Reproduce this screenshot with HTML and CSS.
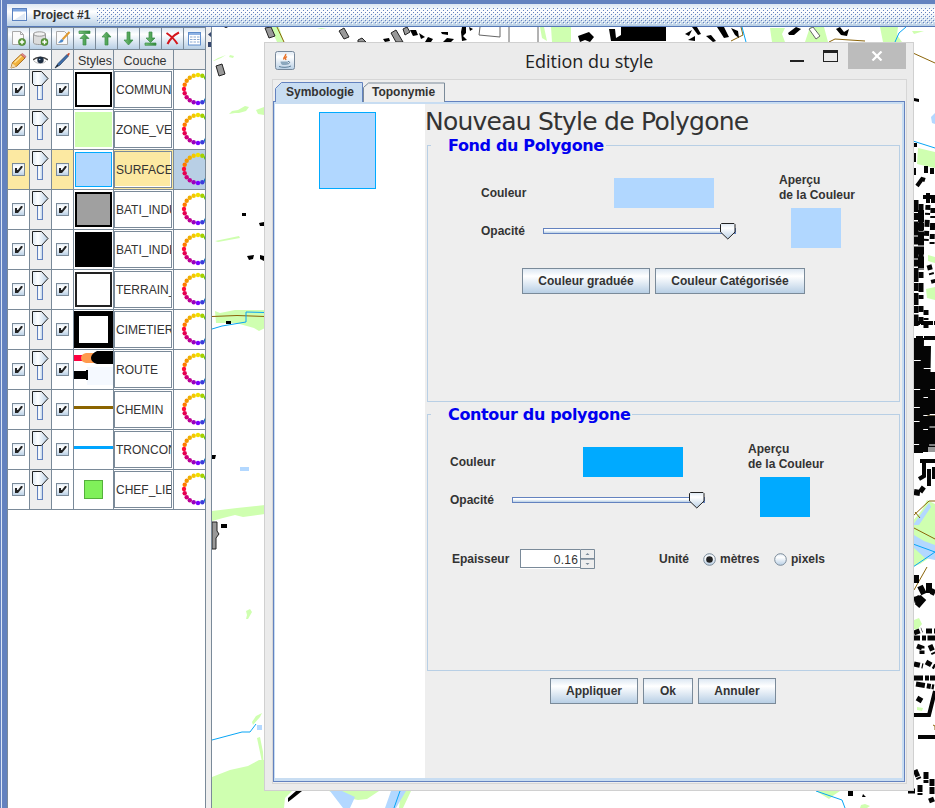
FILE: index.html
```
<!DOCTYPE html>
<html lang="fr">
<head>
<meta charset="utf-8">
<title>Project #1</title>
<link rel="stylesheet" href="styles.css">
</head>
<body>
<svg class="defs" width="0" height="0" aria-hidden="true">
  <defs>
    <linearGradient id="metal" x1="0" y1="0" x2="0" y2="1"><stop offset="0" stop-color="#dde8f3"/><stop offset=".3" stop-color="#fff"/><stop offset="1" stop-color="#b8cfe5"/></linearGradient>
    <linearGradient id="metalH" x1="0" y1="0" x2="1" y2="0"><stop offset="0" stop-color="#dde8f3"/><stop offset=".35" stop-color="#fff"/><stop offset="1" stop-color="#b8cfe5"/></linearGradient>
    <linearGradient id="green" x1="0" y1="0" x2="1" y2="0"><stop offset="0" stop-color="#7cc47c"/><stop offset="1" stop-color="#2f8a3a"/></linearGradient>
    <pattern id="bumps" width="4" height="4" patternUnits="userSpaceOnUse"><path d="M0 0h1v1H0zM2 2h1v1H2z" fill="#6382bf"/><path d="M1 1h1v1H1zM3 3h1v1H3z" fill="#fff"/></pattern>
    <symbol id="plus" viewBox="0 0 8 8"><circle cx="4" cy="4" r="3.6" fill="#5b9a3c" stroke="#3f7a28" stroke-width=".6"/><path d="M4 1.8v4.4M1.8 4h4.4" stroke="#fff" stroke-width="1.4"/></symbol>
    <symbol id="thumb" viewBox="0 0 16 17"><path d="M.5 1.500 1.500.5h12.500l1 1v7.500L7.800 16 .5 9z" fill="url(#metal)" stroke="#222" stroke-width="1"/></symbol>
  </defs>
</svg>
<div class="frame">
  <header class="titlebar">
    <svg class="win-icon" width="16" height="14"><rect x=".5" y=".5" width="14" height="12" fill="#fff" stroke="#5a82c0"/><rect x="1" y="1" width="13" height="2.500" fill="#7ea6e0"/><path d="M2 12 13 5v7z" fill="#dfe9f5"/></svg>
    <span class="project">Project #1</span>
    <svg class="bumps" width="838" height="16"><rect width="838" height="16" fill="url(#bumps)"/></svg>
  </header>
  <div class="main">
    <aside class="layers">
      <div class="toolbar">
        <button><svg width="17" height="17"><path d="M2.500 1.500h8l3 3v10h-11z" fill="#fafafa" stroke="#aaa"/><path d="M10.500 1.500v3h3" fill="none" stroke="#aaa"/><use href="#plus" x="8" y="8" width="8" height="8"/></svg></button>
        <button><svg width="17" height="17"><path d="M1.500 4v9c1 2 11 2 12 0V4z" fill="#dcdcdc" stroke="#999"/><ellipse cx="7.500" cy="4" rx="6" ry="2.200" fill="#f2f2f2" stroke="#999"/><use href="#plus" x="8.500" y="8" width="8" height="8"/></svg></button>
        <button><svg width="17" height="17"><path d="M2.500 1.500h8l3 3v10h-11z" fill="#fafafa" stroke="#aaa"/><path d="m15.500 2-7 7.500" stroke="#e09a30" stroke-width="2"/><path d="M4 12.500c2-.5 2-3 4-3.500l1.500 1.500c-.5 2-3 2.500-5.500 2z" fill="#4a86c8"/></svg></button>
        <button><svg width="17" height="17"><path d="M3 1h11v2.500H3zM8.500 4 13 8.500h-3V15H7V8.500H4z" fill="url(#green)" stroke="#3a8d49" stroke-width=".7"/></svg></button>
        <button><svg width="17" height="17"><path d="M8.500 2 13 7h-3v8H7V7H4z" fill="url(#green)" stroke="#3a8d49" stroke-width=".7"/></svg></button>
        <button><svg width="17" height="17"><path d="M8.500 15 13 10h-3V2H7v8H4z" fill="url(#green)" stroke="#3a8d49" stroke-width=".7"/></svg></button>
        <button><svg width="17" height="17"><path d="M8.500 12.500 13 8h-3V2H7v6H4zM3 13h11v2.300H3z" fill="url(#green)" stroke="#3a8d49" stroke-width=".7"/></svg></button>
        <button><svg width="17" height="17"><path d="M2.500 3C7 6 11 10 13.500 14M15 2.500C10 5 6 9 3.500 14" fill="none" stroke="#d4161c" stroke-width="2"/></svg></button>
        <button><svg width="17" height="17"><rect x="2.500" y="2.500" width="12" height="12.500" fill="#fff" stroke="#5f8dcc"/><path d="M3 4h11" stroke="#8fb3e4" stroke-width="2"/><path d="M4 7h9.500M4 9.500h9.500M4 12h9.500" stroke="#8aa8d0" stroke-dasharray="2.500 1"/></svg></button>
      </div>
      <div class="row head">
        <div class="c"><svg width="18" height="16"><path d="m1 15 1.500-5.500L11 1.500l4 3.500-8.500 8.300z" fill="#f2b33c" stroke="#a86b1e"/><path d="m4.500 9.500 7-6.500" stroke="#ffe29a" stroke-width="1.500"/><path d="m11 1.500 1.500-1 3.500 3-1 1.500z" fill="#e58a8a" stroke="#b45a55" stroke-width=".6"/><path d="m1 15 1.500-4.500 3.500 3z" fill="#f3dcae"/></svg></div>
        <div class="c eye"><svg width="15" height="10"><path d="M0 5c3-3.500 11-4 15 0" fill="none" stroke="#444" stroke-width="1.400"/><path d="M1 6c3 3 9 3.500 12 0" fill="none" stroke="#999" stroke-width=".7"/><circle cx="7.500" cy="5" r="3.200" fill="#1d2d42"/><circle cx="6.700" cy="4.500" r=".8" fill="#9cc3e6"/></svg></div>
        <div class="c"><svg width="18" height="17"><path d="m1 16 3-4.500L13 2.500l1.500 1.500L6 13z" fill="#3e6fae" stroke="#1b3557" stroke-width=".7"/><path d="m13 2.500 1.500-1.500 1.500.5-1.500 2.500z" fill="#c84a2c"/><path d="m1 16 2.500-3.500 1 1z" fill="#222"/></svg></div>
        <div class="c">Styles</div><div class="c name-head">Couche</div><div class="c"></div>
      </div>
      <div id="rows"></div>
    </aside>
    <div class="divider"><svg width="5" height="20"><path d="M5 1v5L2 3.500zM2 11h3v5H2z" fill="#34466e"/></svg></div>
    <svg class="map" viewBox="212 27 723 781" width="723" height="781">
      <rect x="212" y="27" width="723" height="781" fill="#fff"/>
      <g fill="#cfffb0">
        <path d="M213 61l5-3 8-3-5 3-7 3zM230 55l4 1-1 2-4-1zM229 114l3-3 6-1 7-4 4 1-3 4-7 2-4 0zM256 110l8-3v8l-6-1zM215 241l24-5 1 2-22 4zM215 311l5 2 15-3 30 0v18l-6 3-5-3-18-5-20 0z"/>
        <path d="M212 511l25-3 28-3v9l-22 3-8-2-12 3-11 3zM246 611l4-2 2 3-4 7h-2l1-4zM252 722l4-6 6-3-2 4-7 8zM257 738l3-1 3 15 1 20-3-15z"/>
        <path d="M212 777l18-7 18-4 11-6h5v31h28l-7 7-1 10h-72zM329 791h50l-12 8-9 1-15-3zM401 791h10l-8 17h-4zM861 805l4-1 5 2-3 2h-7zM816 791h24l-6 4-5 4z"/>
        <path d="M270 27h9l5 15h-7zM317 28h10l-6 1zM540 27h4l3 14-5-3zM551 27h20v15h-19zM770 28h15l-3 6 3 8h-13zM810 27h14l4 15h-23zM880 27h18l-1 8 5 7h-19zM912 31l12 0-10 3zM918 148l17 4v16l-18-4zM928 255l7 2v6l-7-2zM926 289l9-2v13l-8-2zM912 522l10-12 5-10 8 4v50l-15 10-8 3zM914 620l5-2 3 6-5 6-3-1zM917 707l6 1-1 3-5-1z"/>
      </g>
      <g fill="#b3d8ff"><path d="M240 467h9v4h-9zM257 725h5v5h-5zM914 535l10 6 11 4v15l-10-2-11-10zM913 525l16-22 2 4-12 18zM330 791h12l13 6-5 11h-7zM391 791h15l-10 17h-11zM935 113l-4 4 1 6 3 1z"/></g>
      <g fill="none" stroke="#8b6409"><path d="M212 316.500l25-1 28 1M277 27l7 15M741 27l2 8-12 6M829 42l6-3 30 2M913 53l22 10M913 516l16-15 6 0M914 528l21 11M914 590l13-23M915 512l5 6M927 416h8"/></g>
      <g fill="none" stroke="#08a5f5"><path d="M212 329l10-3 24-4 0-10 19 .5M212 740l30-8 8 0 6-8M400 791l-6 17M742 27l4 15M895 42l4-9 7-6M816 791l26 9 3 8M913 141l22 7M913 544l22 8-22 15"/></g>
      <g fill="#999" stroke="#222" stroke-width="1"><path d="M216 66l6-2 3 10-6 2zM265 28l6-1 4 9-6 2zM339 31l5-3 5 9-5 2zM358 40l4-2 4 4h-8zM391 33l5-3 7 12h-7zM403 29l4-2 3 5-5 3zM212 522h5v9l2 3-3 4v11h-4z"/></g>
      <g fill="#fff" stroke="#666"><path d="M480 27l-1 8 21 2v-10M509 27v15M538 27v15M809 29l4-2 7 9-4 3z"/></g>
      <path d="M242 213h4v3h-4zM259 223l5-1v4h-4zM247 256l7-1-1 4-4 1zM260 255l4 1v5l-4-2zM226 321h5v3h-5zM212 455l4 0-1 4h-3zM221 524h6v4h-6zM288 798l8-7h6l-10 8-4 3zM848 791h5v5h-5zM863 794l3 3-4 0zM224 27l4 0-2 1z"/>
      <path d="M410 30h6l2 5-5 1zM419 33l6 4-4 2zM428 37l5 2-2 3h-6zM441 32l7 0 0 3-6-1zM447 38l7 1-3 3h-8zM462 27h4v6l-3 3 4 4-5 1-1-9zM469 27l4 2-3 2zM383 39l6-1 1 3-5 1zM578 36l11-4 5 5-4 5-5-2-5 2zM609 29h6l1 9 5-3v-8h45v14h-55zM685 34l7-4-3 6zM688 40l7-4 0 5zM692 27h5l4 7-3 1zM706 36l5-1 5 6-3 1zM717 27l7 0 5 10-5 1zM731 28l7 3 1 7-4-3zM788 33l8-6 5 2-7 6-5 0zM836 29l4-2 4 5 5-3-2 7-6-1zM914 98l5 1v3l-5-1z"/>
      <!-- dense housing along the eastern edge -->
      <g fill="none" stroke="#050505">
        <path d="M915 143v4M914 153v9M914 168v7M926 166v7M932 168v6M917 186l5-7 3 1M928 193v10M933 195v8M923 197h8" stroke-width="4"/>
        <path d="M915.500 200v126M921 210v60" stroke-width="6" stroke-dasharray="12 1 7 1.500 14 1 8 2"/>
        <path d="M921 204v120" stroke-width="5" stroke-dasharray="6 5 9 3 4 7"/>
        <path d="M928 205l-2 40M933 208l-1 38M929 265l5 18M926 310v18" stroke-width="5" stroke-dasharray="5 3 2 5 7 4"/>
        <path d="M913 323h22M916 338h19" stroke-width="4" stroke-dasharray="7 1 12 1"/>
        <path d="M919 338l-1 115M926 346l-2 107" stroke-width="10" stroke-dasharray="22 1 28 1 17 1 13 1"/>
        <path d="M932 372v78" stroke-width="8" stroke-dasharray="17 1 24 1.500 11 1"/>
        <path d="M924 462v14l-5 3M920 461h15M929 469v17M934 467v12" stroke-width="4"/>
        <path d="M914 492l6 1M920 488l4 3M916 575v8M920 586l4 8M929 583v10M916 597l5 5" stroke-width="6"/>
        <path d="M914 600l8-2M917 606l7-8M931 591l4 2" stroke-width="6"/>
        <path d="M914 633l8-3M926 631h9M914 638h21M917 646l5 2 0 6M930 645l4 9M914 664l9 2M926 662l9 5" stroke-width="5" stroke-dasharray="6 2 4 1.500 8 2"/>
        <path d="M914 678h21M916 684l18 3M917 698l5 3" stroke-width="5" stroke-dasharray="9 2 4 1"/>
        <path d="M913 715h16l6-24M918 737h17" stroke-width="4"/>
        <path d="M915 770l4 9M926 772v11M932 779v15M920 785v10M908 791h7M929 801l5-2" stroke-width="5" stroke-dasharray="7 1"/>
      </g>
      <path d="M928 447h7v5h-7zM912 458h2v8h-2z" fill="#999"/>
      <path d="M933 725l2 1v4" fill="none" stroke="#8b6409"/>
    </svg>
  </div>
</div>

<section class="dialog">
  <div class="dialog-title">
    <svg class="java" width="20" height="20"><rect x=".5" y=".5" width="19" height="18" rx="2" fill="url(#metal)" stroke="#77889a"/><path d="M10.500 3c1.500 2-3 3-1.500 5.500M12 5.500c-2 1.500-2 1.500-1 3.500" fill="none" stroke="#e8742c" stroke-width="1.500"/><path d="M5.500 10.500h7.500c0 2-1 3-1.500 3.500h-4c-1-.5-2-1.500-2-3.500z" fill="#8ba7bd"/><path d="M13 10.500c2.500-.5 2 2.500-.8 2.500M4 15.500c3 1.200 9 1.200 12-.5" fill="none" stroke="#5d7e98"/></svg>
    <h1>Edition du style</h1>
    <div class="controls"><i class="min"></i><i class="max"></i><span class="close"><svg width="12" height="10"><path d="M1.500.5l9 9M10.500.5l-9 9" stroke="#fff" stroke-width="2.200"/></svg></span></div>
  </div>
  <div class="content">
    <nav class="tabs">
      <svg class="tab-shape" width="172" height="20"><path d="M88.500 20V5.500l5-4.500h76v19" fill="#eee" stroke="#7a8a99"/><path d="M.5 20V6.500L6.500.500h81V20z" fill="#c8ddf2"/><path d="M.5 20V6.500L6.500.500h81V20" fill="none" stroke="#6382bf"/></svg>
      <span class="tab one">Symbologie</span><span class="tab two">Toponymie</span>
    </nav>
    <div class="pane">
      <div class="preview"><i></i></div>
      <div class="form">
        <h2>Nouveau Style de Polygone</h2>
        <section class="group fill">
          <h3>Fond du Polygone</h3>
          <div class="split">
            <div class="fields">
              <div class="field color"><label>Couleur</label><i class="swatch"></i></div>
              <div class="field"><label>Opacité</label><span class="slider"><i></i><svg width="16" height="17"><use href="#thumb"/></svg></span></div>
            </div>
            <div class="apercu"><p>Aperçu<br>de la Couleur</p><i></i></div>
          </div>
          <div class="buttons"><button style="width:128px">Couleur graduée</button><button style="width:150px">Couleur Catégorisée</button></div>
        </section>
        <section class="group stroke">
          <h3>Contour du polygone</h3>
          <div class="split">
            <div class="fields">
              <div class="field color"><label>Couleur</label><i class="swatch"></i></div>
              <div class="field"><label>Opacité</label><span class="slider"><i></i><svg width="16" height="17"><use href="#thumb"/></svg></span></div>
            </div>
            <div class="apercu"><p>Aperçu<br>de la Couleur</p><i></i></div>
          </div>
          <div class="width-row">
            <label class="ep">Epaisseur</label>
            <span class="spinner"><span>0.16</span><b><svg width="15" height="20"><path d="M.5.500h14v19H.500zM0 9.500h15" fill="none" stroke="#7a8a99"/><path d="M0 10.500h15" stroke="#7a8a99" stroke-width=".7"/><path d="M5.500 6 7.500 4l2 2zM5.500 14l2 2 2-2z" fill="#7a8a99"/></svg></b></span>
            <label class="unit">Unité</label>
            <svg class="radio" width="13" height="13"><circle cx="6.500" cy="6.500" r="5.800" fill="url(#metal)" stroke="#7a8a99"/><circle cx="6.500" cy="6.500" r="3.300" fill="#222"/></svg>
            <label class="m">mètres</label>
            <svg class="radio" width="13" height="13"><circle cx="6.500" cy="6.500" r="5.800" fill="url(#metal)" stroke="#7a8a99"/></svg>
            <label>pixels</label>
          </div>
        </section>
        <div class="buttons actions"><button style="width:88px">Appliquer</button><button style="width:50px">Ok</button><button style="width:78px">Annuler</button></div>
      </div>
    </div>
  </div>
</section>
<script src="script.js"></script>
</body>
</html>
```
FILE: styles.css
```
* { box-sizing: border-box; }
body { margin: 0; width: 935px; height: 808px; overflow: hidden; position: relative; font: 12px "Liberation Sans", Arial, sans-serif; color: #333; background: #eee; }
.defs { position: absolute; }
svg { display: block; flex: none; }
h1, h2, h3, p { margin: 0; }
i { display: block; }

.frame { height: 808px; padding: 4px 0 0 7px; background: linear-gradient(90deg, #6382bf 1px, #dde7f6 1px 2px, #6382bf 2px); overflow: hidden; }
.titlebar { display: flex; align-items: center; height: 23px; padding-left: 5px; border-bottom: 1px solid #5577b5; background: linear-gradient(#dde8f3, #fff 35%, #b8cfe5); }
.project { width: 64px; margin-left: 5px; font-weight: bold; white-space: nowrap; }
.bumps { margin-top: 1px; }
.main { display: flex; height: 781px; }
.layers { width: 199px; flex: none; border-left: 1px solid #7a8a99; border-right: 1px solid #7a8a99; background: #fff; overflow: hidden; }
.toolbar { display: flex; height: 23px; width: 198px; background: #7a8a99; gap: 1px; padding: 1px 0; }
.toolbar button { width: 21px; flex: none; height: 21px; padding: 0; border: 0; background: linear-gradient(#dde8f3, #fff 30%, #b8cfe5); display: flex; align-items: center; justify-content: center; }
.row { display: grid; grid-template-columns: 22px 22px 22px 40px 60px 32px; height: 40px; }
.row > .c { border-right: 1px solid #7a8a99; border-bottom: 1px solid #7a8a99; overflow: hidden; display: flex; align-items: center; justify-content: center; }
.row.head { height: 20px; background: #eee; }
.row.head .c { font-size: 12.5px; padding-top: 2px; }
.row.head .eye { background: #fff; padding: 0; }
.row.head .c:nth-child(4) { padding-left: 3px; }
.row.head .name-head { padding-left: 3px; }
.row .op { background: #eee; align-items: flex-start; justify-content: flex-start; padding: 1px 0 0 2px; }
.row > .name { justify-content: flex-start; padding: 1px 1px 1px 0; }
.name span { display: flex; align-items: center; width: 58px; height: 37px; border: 1px solid #7a8a99; padding: 1px 0 0 1px; overflow: hidden; white-space: nowrap; box-shadow: inset -1px -1px #fff; }
.row > .ringc { justify-content: flex-start; align-items: flex-start; padding-left: 7px; border-right: 0; }
.row > .op { align-items: flex-start; justify-content: flex-start; }
.row.sel .ck, .row.sel .name { background: #fce9a2; }
.row.sel .ringc { background: #b8cfe5; }
.divider { width: 6px; flex: none; background: #eee; border-right: 1px solid #7a8a99; padding-top: 4px; }

.dialog { position: absolute; left: 264px; top: 42px; width: 650px; height: 749px; border: 1px solid #d0d0d0; background: #ebebeb; }
.dialog-title { display: flex; height: 36px; padding-left: 10px; }
.java { margin-top: 8px; }
h1 { width: 128px; margin-left: 230px; padding-top: 4px; white-space: nowrap; font: 18px/29px "Open Sans", "Noto Sans", sans-serif; color: #222; }
.controls { display: flex; margin-left: 137px; }
.min { width: 14px; height: 2px; background: #222; margin-top: 17px; }
.max { width: 15px; height: 12px; border: 1px solid #222; border-top-width: 3px; margin: 7px 10px 0 19px; }
.close { width: 58px; height: 26px; background: #bcbcbc; display: flex; align-items: center; justify-content: center; }
.content { width: 635px; height: 705px; margin: 0 7px; border: 1px solid #d6d6d6; background: #eee; }
.tabs { display: flex; height: 21px; position: relative; padding: 3px 0 0 13px; font-weight: bold; line-height: 18px; }
.tab-shape { position: absolute; left: 2px; top: 2px; }
.tab { position: relative; width: 86px; }
.pane { display: flex; width: 632px; height: 681px; border: 1px solid #6382bf; padding: 2px 2px 3px 1px; background: #c8ddf2; }
.preview { width: 150px; flex: none; background: #fff; padding: 8px 0 0 44px; }
.preview i { width: 57px; height: 77px; background: #b1d7ff; border: 1px solid #00aaff; }
.form { flex: 1; background: #eee; }
h2 { height: 41px; font: 25px/35px "DejaVu Sans", Verdana, sans-serif; white-space: nowrap; letter-spacing: -.77px; }
.group { width: 473px; height: 257px; margin: 0 0 12px 2px; border: 1px solid #b8cfe5; }
h3 { width: max-content; height: 18px; margin: -9px 0 0 3px; padding: 0 2px 0 17px; font: bold 16px/18px "DejaVu Sans", Verdana, sans-serif; color: #0000f0; background: #eee; white-space: nowrap; letter-spacing: -.35px; }
.split { display: flex; margin: 18px 0 0 53px; height: 77px; }
.fields { width: 298px; padding-top: 5px; }
.field { display: flex; align-items: center; height: 30px; font-weight: bold; }
.field + .field { margin-top: 9px; height: 28px; }
.field label { width: 62px; }
.swatch { width: 100px; height: 30px; margin-left: 71px; }
.slider { position: relative; width: 193px; height: 17px; }
.slider i { height: 6px; margin-top: 5px; border: 1px solid #6382bf; background: linear-gradient(#fff, #fff 30%, #b8cfe5); }
.slider svg { position: absolute; right: 0; top: 0; }
.apercu { font-weight: bold; line-height: 15px; white-space: nowrap; }
.apercu i { width: 50px; height: 40px; margin: 5px 0 0 12px; }
.fill .swatch, .fill .apercu i { background: #b1d7ff; }
.stroke .swatch, .stroke .apercu i { background: #00aaff; }
.buttons { display: flex; gap: 5px; margin: 18px 0 0 94px; }
.buttons button { height: 26px; padding: 0; border: 1px solid #7a8a99; background: linear-gradient(#dde8f3, #fff 30%, #b8cfe5); font: bold 12px "Liberation Sans", Arial, sans-serif; color: #333; }
.buttons.actions { margin: -5px 0 0 125px; }
.stroke .split { margin-left: 22px; }
.width-row { display: flex; align-items: center; height: 20px; margin: 30px 0 0 24px; font-weight: bold; }
.ep { width: 68px; }
.spinner { display: flex; width: 75px; height: 20px; background: #fff; font-weight: normal; }
.spinner span { width: 60px; height: 19px; line-height: 20px; text-align: right; padding-right: 2px; border: solid #7a8a99; border-width: 1px 0 1px 1px; letter-spacing: .2px; }
.spinner b { background: #eee; }
.unit { width: 44px; margin-left: 64px; }
.radio { margin-right: 4px; }
.m { width: 54px; }
```
FILE: script.js
```
const box = (fill, stroke, w) => `<svg width="39" height="39"><rect x="${1 + w / 2}" y="${2 + w / 2}" width="${37 - w}" height="${35 - w}" fill="${fill}" stroke="${stroke}" stroke-width="${w}"/></svg>`;
const line = (color) => `<svg width="39" height="39"><path d="M0 17.500h39" stroke="${color}" stroke-width="3"/></svg>`;
const route = '<svg width="39" height="39"><path d="M13 17h26v18H13z" fill="#f5f9ff"/><path d="M0 5h8v6H0z" fill="#ff0040"/><path d="M20 3h-8q-5 1-5 5t5 5h8z" fill="#ff9a4d"/><path d="M39 1H23q-6 3-6 7t6 6h16zM0 21h12v-1h2v10h-2v-1H0z"/></svg>';
const layers = [
  ['COMMUNE', box('#fff', '#000', 2)],
  ['ZONE_VEGETATION', box('#cfffb0', '#cfffb0', 1)],
  ['SURFACE_EAU', box('#b1d7ff', '#00aaff', 1)],
  ['BATI_INDUSTRIEL', box('#a0a0a0', '#000', 2)],
  ['BATI_INDIFF', box('#000', '#000', 1)],
  ['TERRAIN_SPORT', box('#fff', '#222', 2)],
  ['CIMETIERE', '<svg width="39" height="39"><rect x="2.500" y="3.500" width="34" height="32" fill="#fff" stroke="#000" stroke-width="5"/></svg>'],
  ['ROUTE', route],
  ['CHEMIN', line('#8b6400')],
  ['TRONCON_EAU', line('#00a5ff')],
  ['CHEF_LIEU', '<svg width="39" height="39"><rect x="10.500" y="10.500" width="18" height="18" fill="#80f05a" stroke="#55b03c"/></svg>'],
];
const hues = ['#f0e000', '#f5c800', '#f0b000', '#f59600', '#ff7800', '#ff0a3c', '#e60050', '#d20078', '#be0096', '#9b00be', '#7800ff', '#3c3cdc', '#0070c0', '#0090b0', '#00a0a0', '#00a878', '#00b050', '#00b428', '#50c800', '#a5d200'];
const dots = hues.map((c, k) => {
  const a = k * Math.PI / 10;
  return `<circle cx="${(17 - 14 * Math.sin(a)).toFixed(1)}" cy="${(19 - 14 * Math.cos(a)).toFixed(1)}" r="2.2" fill="${c}"/>`;
}).join('');
const check = '<svg width="13" height="13"><rect x=".5" y=".5" width="12" height="12" fill="url(#metal)" stroke="#7a8a99"/><path d="M3 5h2v2h1l3-4h1.500v1.500L6 10H3z" fill="#222"/></svg>';
const slider = '<svg width="17" height="31"><rect x="5.500" y="10.500" width="5" height="18" fill="url(#metalH)" stroke="#6382bf"/><path d="M.5.500h9l6.500 7-6.500 7H2.500l-2-2z" fill="url(#metalH)" stroke="#222"/></svg>';
document.getElementById('rows').innerHTML = layers.map(([name, style], k) =>
  `<div class="row${k === 2 ? ' sel' : ''}"><div class="c ck">${check}</div><div class="c op">${slider}</div><div class="c ck">${check}</div><div class="c sty">${style}</div><div class="c name"><span>${name}</span></div><div class="c ringc"><svg width="34" height="38">${dots}</svg></div></div>`
).join('');
```
